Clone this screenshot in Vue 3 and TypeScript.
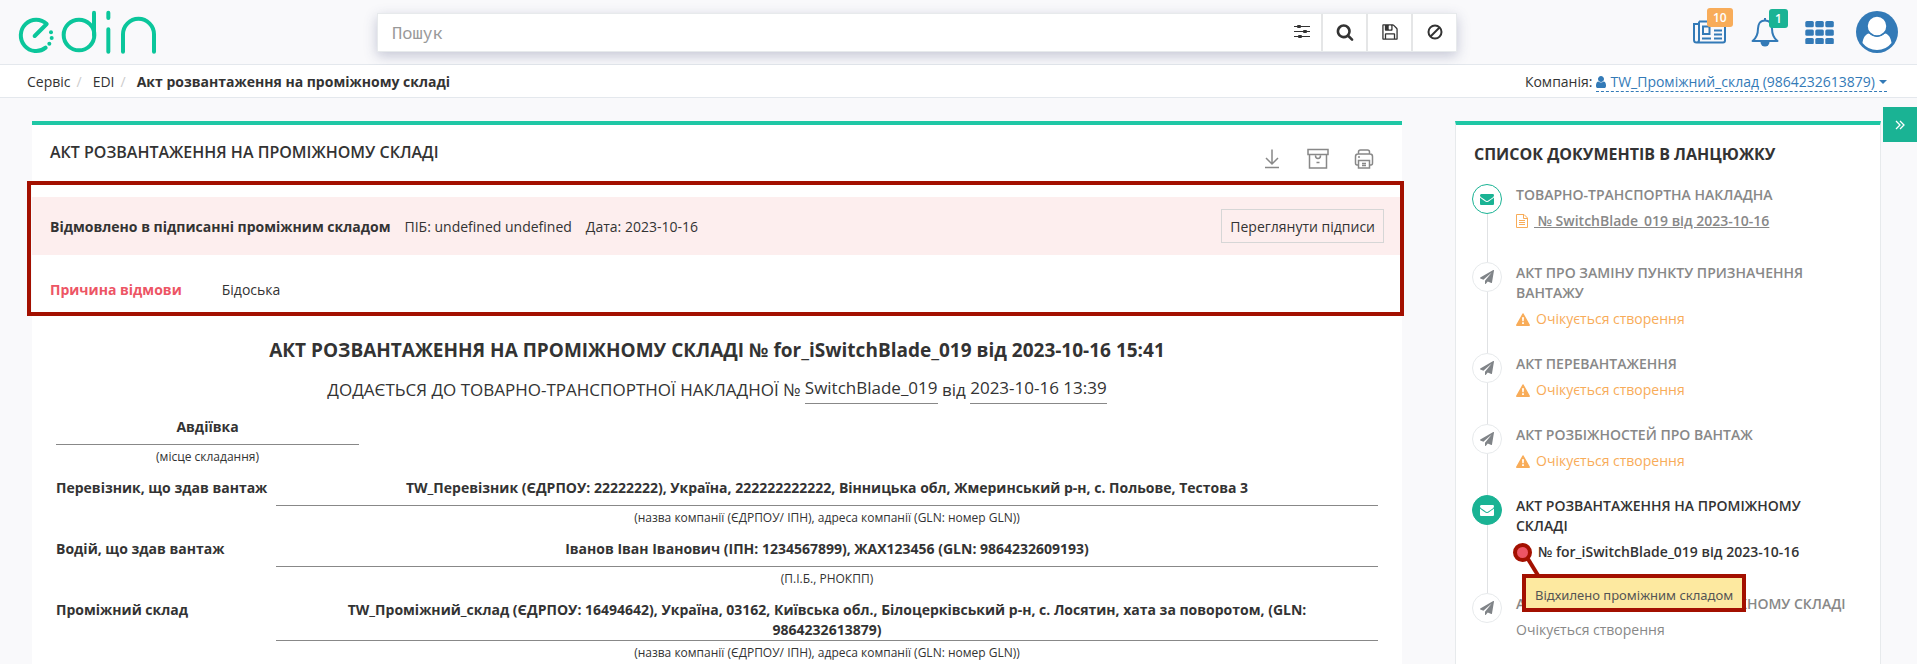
<script setup lang="ts">
import { ref } from 'vue'

interface FormRow {
  label: string
  value: string
  hint: string
}

interface ChainItem {
  title: string
  kind: 'sent' | 'waiting' | 'current'
  status?: string
  warning?: boolean
  doc?: string
}

const search = ref('')

const rows: FormRow[] = [
  {
    label: 'Перевізник, що здав вантаж',
    value: 'TW_Перевізник (ЄДРПОУ: 22222222), Україна, 222222222222, Вінницька обл, Жмеринський р-н, с. Польове, Тестова 3',
    hint: '(назва компанії (ЄДРПОУ/ ІПН), адреса компанії (GLN: номер GLN))',
  },
  {
    label: 'Водій, що здав вантаж',
    value: 'Іванов Іван Іванович (ІПН: 1234567899), ЖАХ123456 (GLN: 9864232609193)',
    hint: '(П.І.Б., РНОКПП)',
  },
  {
    label: 'Проміжний склад',
    value: 'TW_Проміжний_склад (ЄДРПОУ: 16494642), Україна, 03162, Київська обл., Білоцерківський р-н, с. Лосятин, хата за поворотом, (GLN: 9864232613879)',
    hint: '(назва компанії (ЄДРПОУ/ ІПН), адреса компанії (GLN: номер GLN))',
  },
]

const chain: ChainItem[] = [
  { title: 'ТОВАРНО-ТРАНСПОРТНА НАКЛАДНА', kind: 'sent', doc: '№ SwitchBlade_019 від 2023-10-16' },
  { title: 'АКТ ПРО ЗАМІНУ ПУНКТУ ПРИЗНАЧЕННЯ ВАНТАЖУ', kind: 'waiting', status: 'Очікується створення', warning: true },
  { title: 'АКТ ПЕРЕВАНТАЖЕННЯ', kind: 'waiting', status: 'Очікується створення', warning: true },
  { title: 'АКТ РОЗБІЖНОСТЕЙ ПРО ВАНТАЖ', kind: 'waiting', status: 'Очікується створення', warning: true },
  { title: 'АКТ РОЗВАНТАЖЕННЯ НА ПРОМІЖНОМУ СКЛАДІ', kind: 'current', doc: '№ for_iSwitchBlade_019 від 2023-10-16' },
  { title: 'АКТ ЗАВАНТАЖЕННЯ НА ПРОМІЖНОМУ СКЛАДІ', kind: 'waiting', status: 'Очікується створення' },
]
</script>

<template>
  <div class="page">
    <header class="header">
      <a class="logo" href="#" aria-label="edin">
        <svg viewBox="0 0 420 132" fill="none" stroke="#0bc69b" stroke-width="12" stroke-linecap="round" stroke-linejoin="round">
          <path d="M50 78 L86 42 A46 47 0 1 0 83 113" />
          <circle cx="183" cy="75" r="46" />
          <path d="M228 8 V75" />
          <path d="M271 8 V24 M271 58 V125" />
          <path d="M315 125 V73 A46 46 0 0 1 408 73 V125" />
          <g fill="#0bc69b" stroke="none">
            <circle cx="99" cy="67" r="6" />
            <circle cx="101" cy="84" r="6" />
            <circle cx="94" cy="101" r="6" />
          </g>
        </svg>
      </a>

      <form class="search" @submit.prevent>
        <input v-model="search" type="text" placeholder="Пошук" aria-label="Пошук" />
        <button type="button" class="tune" aria-label="Фільтри">
          <svg viewBox="0 0 16 16" width="16" height="16" fill="#333">
            <path d="M0 2h16v1H0zM0 7h16v1H0zM0 12h16v1H0z" />
            <rect x="3" y="1" width="4" height="3" rx="1" /><rect x="9" y="6" width="4" height="3" rx="1" /><rect x="4" y="11" width="4" height="3" rx="1" />
          </svg>
        </button>
        <button type="submit" aria-label="Знайти">
          <svg viewBox="0 0 1792 1792" width="18" height="18" fill="#333">
            <path d="M1216 832q0-185-131.500-316.500t-316.500-131.500-316.500 131.500-131.500 316.500 131.500 316.500 316.500 131.500 316.500-131.500 131.500-316.500zm512 832q0 52-38 90t-90 38q-54 0-90-38l-343-342q-179 124-399 124-143 0-273.500-55.500t-225-150-150-225-55.500-273.500 55.500-273.500 150-225 225-150 273.500-55.500 273.500 55.500 225 150 150 225 55.500 273.500q0 220-124 399l343 343q37 37 37 90z" />
          </svg>
        </button>
        <button type="button" aria-label="Зберегти">
          <svg viewBox="0 0 1792 1792" width="18" height="18" fill="#333">
            <path d="M512 1536h768v-384h-768v384zm896 0h128v-896q0-14-10-38.500t-20-34.500l-281-281q-10-10-34-20t-39-10v416q0 40-28 68t-68 28h-576q-40 0-68-28t-28-68v-416h-128v1280h128v-416q0-40 28-68t68-28h832q40 0 68 28t28 68v416zm-384-928v-320q0-13-9.500-22.500t-22.500-9.500h-192q-13 0-22.500 9.500t-9.500 22.500v320q0 13 9.500 22.500t22.500 9.500h192q13 0 22.500-9.500t9.500-22.500zm640 32v928q0 40-28 68t-68 28h-1344q-40 0-68-28t-28-68v-1344q0-40 28-68t68-28h928q40 0 88 20t76 48l280 280q28 28 48 76t20 88z" />
          </svg>
        </button>
        <button type="button" aria-label="Очистити">
          <svg viewBox="0 0 18 18" width="18" height="18" fill="none" stroke="#333" stroke-width="2">
            <circle cx="9" cy="9" r="6.500" /><path d="M4.500 13.500 L13.500 4.500" />
          </svg>
        </button>
      </form>

      <nav class="tools">
        <a class="tool" href="#" aria-label="Новини">
          <svg viewBox="0 0 33 24" width="33" height="24" fill="none" stroke="#337ab7" stroke-width="2">
            <path d="M6 1.500 H30.500 Q32 1.500 32 3 V20.500 Q32 22.500 30 22.500 H3.500 Q1 22.500 1 20 V4 H6 M6 1.500 V20 Q6 22.500 3.500 22.500" />
            <path d="M10 6.500h6.500v7.500H10z M9 18.500h9 M21 6h8 M21 10.500h8 M21 14.500h8 M21 18.500h8" />
          </svg>
          <span class="badge badge-orange">10</span>
        </a>
        <a class="tool" href="#" aria-label="Сповіщення">
          <svg viewBox="0 0 28 30" width="28" height="30" fill="none" stroke="#337ab7" stroke-width="2" stroke-linejoin="round">
            <path d="M14 3.500 C8.500 3.500 7 8 7 11.500 C7 18 5 21.500 1.500 24 H26.500 C23 21.500 21 18 21 11.500 C21 8 19.500 3.500 14 3.500z" />
            <path d="M14 3.500 V1" />
            <path d="M9.500 25 A4.500 4.500 0 0 0 18.500 25z" fill="#337ab7" stroke="none" />
          </svg>
          <span class="badge badge-green">1</span>
        </a>
        <a class="tool" href="#" aria-label="Сервіси">
          <svg viewBox="0 0 29 23" width="29" height="23" fill="#337ab7">
            <g v-for="r in 3" :key="r">
              <rect v-for="c in 3" :key="c" :x="(c - 1) * 10 + 0.300" :y="(r - 1) * 8.500" width="8.500" height="6.300" rx="1.500" />
            </g>
          </svg>
        </a>
        <a class="tool" href="#" aria-label="Профіль">
          <svg viewBox="0 0 42 42" width="42" height="42">
            <circle cx="21" cy="21" r="21" fill="#337ab7" />
            <path d="M6.500 32 C7 27 9.500 23 13 22.500 Q21 29.500 29 22.500 C32.500 23 35 27 35.500 32 Q30 39 21 39 Q12 39 6.500 32z" fill="#fff" />
            <circle cx="21" cy="15" r="10" fill="#fff" stroke="#337ab7" stroke-width="1.500" />
          </svg>
        </a>
      </nav>
    </header>

    <div class="crumbbar">
      <nav class="crumbs">
        <a href="#">Сервіс</a><span class="slash">/</span>
        <a href="#">EDI</a><span class="slash">/</span>
        <strong>Акт розвантаження на проміжному складі</strong>
      </nav>
      <div class="company">
        <span>Компанія:</span>
        <a href="#">
          <svg viewBox="256 128 1280 1536" width="10" height="12" fill="#337ab7">
            <path d="M1536 1399q0 109-62.500 187t-150.500 78h-854q-88 0-150.500-78t-62.500-187q0-85 8.500-160.500t31.500-152 58.500-131 94-89 134.500-34.500q131 128 313 128t313-128q76 0 134.500 34.500t94 89 58.500 131 31.500 152 8.500 160.500zm-256-887q0 159-112.500 271.500t-271.500 112.500-271.500-112.500-112.500-271.500 112.500-271.500 271.500-112.500 271.500 112.500 112.500 271.500z" />
          </svg>
          TW_Проміжний_склад (9864232613879)
          <i class="caret"></i>
        </a>
      </div>
    </div>

    <main class="content">
      <section class="panel doc">
        <div class="doc-head">
          <h1>АКТ РОЗВАНТАЖЕННЯ НА ПРОМІЖНОМУ СКЛАДІ</h1>
          <div class="doc-actions">
            <button type="button" aria-label="Завантажити">
              <svg viewBox="0 0 22 22" width="22" height="22" fill="none" stroke="#888" stroke-width="1.500">
                <path d="M11 1.500V16 M5 10l6 6 6-6 M4 19.500h14" />
              </svg>
            </button>
            <button type="button" aria-label="Архівувати">
              <svg viewBox="0 0 22 22" width="22" height="22" fill="none" stroke="#888" stroke-width="1.500">
                <path d="M1 1.500h20v5h-20z M2.500 7v13h17V7 M8.500 7.500q0 3 2.500 3t2.500-3 M9.500 14.500h3" />
              </svg>
            </button>
            <button type="button" aria-label="Друкувати">
              <svg viewBox="0 0 22 22" width="22" height="22" fill="none" stroke="#888" stroke-width="1.500">
                <path d="M5.500 6V4q0-2 2-2h7q2 0 2 2v2 M5.500 17H4q-1.500 0-1.500-2V8.500Q2.500 6 5 6h12q2.500 0 2.500 2.500V15q0 2-1.500 2h-1.500 M5.500 12.500h11V20h-11z M9 15.500h4 M9 17.500h4 M5 9h2" />
              </svg>
            </button>
          </div>
        </div>

        <div class="refusal">
          <div class="refusal-band">
            <p><strong>Відмовлено в підписанні проміжним складом</strong><span>ПІБ: undefined undefined</span><span>Дата: 2023-10-16</span></p>
            <button type="button" class="sign-btn">Переглянути підписи</button>
          </div>
          <div class="refusal-reason">
            <strong>Причина відмови</strong>
            <span>Бідоська</span>
          </div>
        </div>

        <div class="form">
          <h2>АКТ РОЗВАНТАЖЕННЯ НА ПРОМІЖНОМУ СКЛАДІ № for_iSwitchBlade_019 від 2023-10-16 15:41</h2>
          <p class="attached">
            ДОДАЄТЬСЯ ДО ТОВАРНО-ТРАНСПОРТНОЇ НАКЛАДНОЇ № <span>SwitchBlade_019</span> від <span>2023-10-16 13:39</span>
          </p>
          <div class="field place">
            <div class="value">Авдіївка</div>
            <div class="hint">(місце складання)</div>
          </div>
          <div v-for="row in rows" :key="row.label" class="form-row">
            <div class="label">{{ row.label }}</div>
            <div class="field">
              <div class="value">{{ row.value }}</div>
              <div class="hint">{{ row.hint }}</div>
            </div>
          </div>
        </div>
      </section>

      <aside class="panel side">
        <h2>СПИСОК ДОКУМЕНТІВ В ЛАНЦЮЖКУ</h2>
        <ol class="chain">
          <li v-for="item in chain" :key="item.title" :class="[item.kind, { 'has-doc': item.doc }]">
            <span class="node">
              <svg v-if="item.kind === 'waiting'" viewBox="0 0 1792 1792" width="14" height="14" fill="#808488">
                <path d="M1764 11q33 24 27 64l-256 1536q-5 29-32 45-14 8-31 8-11 0-24-5l-453-185-242 295q-18 23-49 23-13 0-22-4-19-7-30.500-23.500t-11.500-36.500v-349l864-1059-1069 925-395-162q-37-14-40-55-2-40 32-59l1664-960q15-9 32-9 20 0 36 11z" />
              </svg>
              <svg v-else viewBox="0 0 1792 1792" width="14" height="14" fill="currentColor">
                <path d="M1792 710v794q0 66-47 113t-113 47h-1472q-66 0-113-47t-47-113v-794q44 49 101 87 362 246 497 345 57 42 92.500 65.500t94.500 48 110 24.500h2q51 0 110-24.500t94.500-48 92.500-65.500q170-123 498-345 57-39 100-87zm0-294q0 79-49 151t-122 123q-376 261-468 325-10 7-42.500 31t-54 38.500-52 32.500-57.500 27-50 9h-2q-23 0-50-9t-57.500-27-52-32.500-54-38.500-42.500-31q-91-64-262-182.500t-205-142.500q-62-42-117-115.500t-55-136.500q0-78 41.500-130t118.500-52h1472q65 0 112.500 47t47.500 113z" />
              </svg>
            </span>
            <div class="item">
              <h3>{{ item.title }}</h3>
              <a v-if="item.kind === 'sent'" class="line link" href="#">
                <svg viewBox="0 0 12 14" width="12" height="14" fill="none" stroke="#f8ac59">
                  <path d="M0.500 0.500h7.500l3.500 3.500v9.500h-11z M7.500 0.500v4h4 M3 6.500h6 M3 8.500h6 M3 10.500h6" />
                </svg>
                <u>&nbsp;{{ item.doc }}</u>
              </a>
              <div v-else-if="item.kind === 'current'" class="line own">
                <span class="dot"></span>
                <strong>{{ item.doc }}</strong>
                <svg class="pointer" viewBox="0 0 20 24" width="20" height="24"><path d="M2 2 L13 20" stroke="#a31000" stroke-width="4" /></svg>
                <span class="tip" role="tooltip">Відхилено проміжним складом</span>
              </div>
              <div v-else class="line" :class="{ warn: item.warning }">
                <svg v-if="item.warning" viewBox="0 0 14 13" width="14" height="13">
                  <path d="M7 1 L13.200 12.200 H0.800z" fill="#f8ac59" stroke="#f8ac59" stroke-width="1.500" stroke-linejoin="round" />
                  <path d="M6 4.300h2l-0.300 4h-1.400z M6.100 9.300h1.800v1.800h-1.800z" fill="#fff" />
                </svg>
                {{ item.status }}
              </div>
            </div>
          </li>
        </ol>
      </aside>

      <button type="button" class="toggle" aria-label="Згорнути">
        <svg viewBox="0 0 10 10" width="10" height="10" fill="none" stroke="#fff" stroke-width="1.300"><path d="M1 1l4 4-4 4 M5 1l4 4-4 4" /></svg>
      </button>
    </main>
  </div>
</template>

<style>
body {
  margin: 0;
  background: #f9f9fb;
}
</style>

<style scoped>
* {
  box-sizing: border-box;
}
.page {
  display: flex;
  flex-direction: column;
  min-height: 100vh;
  background: #f9f9fb;
  color: #333;
  font: 14px/20px "Open Sans", "Noto Sans", sans-serif;
}
h1, h2, h3, p, ol {
  margin: 0;
  padding: 0;
  list-style: none;
}
a {
  color: inherit;
  text-decoration: none;
}
button {
  padding: 0;
  border: 0;
  background: none;
  color: inherit;
  font: inherit;
  cursor: pointer;
}
svg {
  display: block;
  flex: none;
}
strong {
  font-weight: 700;
}
.header {
  display: grid;
  grid-template-columns: 377fr 1080fr 460fr;
  align-items: center;
  height: 65px;
  border-bottom: 1px solid #e4e8ed;
}
.logo {
  padding-left: 18px;
}
.logo svg {
  width: 140px;
  height: 44px;
}
.search {
  display: flex;
  height: 39px;
  background: #fff;
  border: 1px solid #e7eaec;
  box-shadow: 0 4px 12px rgba(60, 70, 120, 0.280);
}
.search input {
  flex: 1;
  min-width: 0;
  padding: 0 14px;
  border: 0;
  outline: 0;
  background: transparent;
  color: #333;
  font: 17px "Noto Sans Mono", "DejaVu Sans Mono", monospace;
}
.search input::placeholder {
  color: #999;
  opacity: 1;
}
.search button {
  display: grid;
  place-items: center;
  width: 45px;
  border-left: 2px solid #e5e6e7;
}
.search .tune {
  width: 39px;
  border: 0;
}
.tools {
  display: flex;
  align-items: center;
  justify-content: flex-end;
  gap: 22px;
  padding-right: 19px;
}
.tool {
  position: relative;
}
.tool:nth-child(2) {
  margin-left: 3px;
}
.tool:nth-child(3) {
  margin-left: 4px;
}
.badge {
  position: absolute;
  bottom: 17px;
  left: 14px;
  padding: 0 6px;
  border-radius: 3px;
  color: #fff;
  font-size: 12px;
  font-weight: 600;
  line-height: 19px;
}
.badge-orange {
  background: #f8ac59;
}
.badge-green {
  bottom: 19px;
  left: 18px;
  background: #1ab394;
}
.crumbbar {
  display: flex;
  justify-content: space-between;
  align-items: center;
  height: 33px;
  padding: 2px 30px 0 27px;
  background: #fff;
  border-bottom: 1px solid #e4e8ed;
}
.crumbs {
  display: flex;
}
.slash {
  padding: 0 11px 0 6px;
  color: #ccc;
}
.company {
  display: flex;
  gap: 4px;
}
.company a {
  display: flex;
  align-items: center;
  gap: 4px;
  color: #337ab7;
  border-bottom: 1px dashed #337ab7;
  line-height: 19px;
}
.caret {
  border: 4px solid transparent;
  border-top-color: #337ab7;
  border-bottom: 0;
}
.content {
  position: relative;
  display: flex;
  flex: 1;
  gap: 53px;
  padding: 23px 36px 0 32px;
}
.panel {
  background: #fff;
  border-top: 4px solid #1fc7a5;
}
.doc {
  flex: 1;
  min-width: 0;
}
.doc-head {
  display: flex;
  justify-content: space-between;
  padding: 17px 27px 0 18px;
  height: 72px;
}
h1 {
  font-size: 16px;
  line-height: 20px;
  font-weight: 600;
}
.doc-actions {
  display: flex;
  gap: 24px;
  padding-top: 6px;
  align-items: flex-start;
}
.refusal {
  position: relative;
}
.refusal::after {
  content: "";
  position: absolute;
  inset: -16px -2px 0 -5px;
  border: 4px solid #a31000;
  pointer-events: none;
}
.refusal-band {
  display: flex;
  align-items: center;
  justify-content: space-between;
  height: 58px;
  padding: 0 18px;
  background: #fdeeee;
}
.refusal-band p {
  padding-top: 2px;
}
.refusal-band span {
  margin-left: 14px;
}
.sign-btn {
  height: 34px;
  padding: 2px 8px 0;
  border: 1px solid #d6d6d6;
}
.refusal-reason {
  display: flex;
  gap: 40px;
  padding: 25px 18px 16px;
}
.refusal-reason strong {
  color: #ed5565;
}
.form {
  padding: 24px 24px 0;
}
.form h2 {
  font-size: 19px;
  line-height: 20px;
  font-weight: 700;
  text-align: center;
}
.attached {
  padding-top: 17px;
  font-size: 17px;
  line-height: 22px;
  text-align: center;
}
.attached span {
  display: inline-block;
  height: 27px;
  border-bottom: 1px solid #888;
  vertical-align: 2px;
}
.field {
  flex: 1;
  text-align: center;
}
.value {
  min-height: 28px;
  padding: 0 30px;
  border-bottom: 1px solid #888;
  font-weight: 700;
}
.hint {
  padding-top: 3px;
  font-size: 12px;
  line-height: 18px;
}
.place {
  width: 303px;
  margin-top: 13px;
}
.form-row {
  display: flex;
  padding-top: 12px;
}
.label {
  width: 220px;
  font-weight: 700;
  white-space: nowrap;
}
.side {
  width: 426px;
  padding: 19px 30px 0 16px;
  border-right: 1px solid #e7eaec;
  border-left: 1px solid #e7eaec;
}
.side h2 {
  padding-left: 2px;
  font-size: 16px;
  font-weight: 700;
}
.chain {
  padding-top: 20px;
}
.chain li {
  position: relative;
  display: flex;
  gap: 14px;
  padding-bottom: 24px;
}
.chain .has-doc {
  padding-bottom: 31px;
}
.chain li:last-child {
  padding-bottom: 0;
}
.chain li:not(:last-child)::before {
  content: "";
  position: absolute;
  top: 30px;
  bottom: 0;
  left: 15px;
  width: 1px;
  background: #e0e2e4;
}
.node {
  display: grid;
  place-items: center;
  flex: none;
  width: 30px;
  height: 30px;
  border: 1px solid #e7eaec;
  border-radius: 50%;
  background: #fff;
}
.sent .node {
  border-color: #1ab394;
  color: #1ab394;
}
.current .node {
  border-color: #1ab394;
  background: #1ab394;
  color: #fff;
}
.item {
  flex: 1;
  color: #888;
}
.item h3 {
  padding-top: 1px;
  font-size: 14px;
  line-height: 20px;
  font-weight: 600;
}
.line {
  display: flex;
  align-items: center;
  gap: 6px;
  margin-top: 6px;
}
.link {
  font-weight: 600;
}
.warn {
  color: #f8ac59;
}
.current .item {
  color: #333;
}
.own {
  position: relative;
}
.own strong {
  font-weight: 600;
}
.dot {
  width: 19px;
  height: 19px;
  margin-left: -3px;
  border: 4px solid #a31000;
  border-radius: 50%;
  background: #ed5565;
}
.pointer {
  position: absolute;
  top: 15px;
  left: 10px;
}
.tip {
  position: absolute;
  z-index: 1;
  top: 32px;
  left: 6px;
  padding: 4px 9px 0;
  height: 38px;
  border: 4px solid #a31000;
  background: #fde9a0;
  color: #555;
  font-family: "Noto Sans", sans-serif;
  font-size: 13px;
  line-height: 26px;
  white-space: nowrap;
}
.toggle {
  position: absolute;
  top: 9px;
  right: 0;
  display: grid;
  place-items: center;
  width: 34px;
  height: 35px;
  background: #1ab394;
}
</style>
